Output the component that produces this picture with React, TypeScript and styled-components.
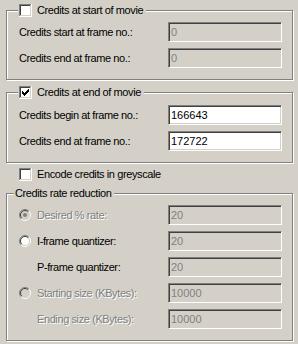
import styled, { createGlobalStyle } from "styled-components";

const GlobalStyle = createGlobalStyle`
    html, body {
        margin: 0;
        padding: 0;
        background: #d4d0c8;
    }
    body {
        font-family: "Liberation Sans", Arial, sans-serif;
        font-size: 11px;
        color: #000;
    }
`;

function CheckBox({ checked }: { checked?: boolean }) {
    return (
        <Box width="13" height="13" viewBox="0 0 13 13" shapeRendering="crispEdges">
            <rect x="0" y="0" width="13" height="13" fill="#fff" />
            <rect x="0" y="0" width="12" height="1" fill="#808080" />
            <rect x="0" y="0" width="1" height="12" fill="#808080" />
            <rect x="1" y="1" width="10" height="1" fill="#404040" />
            <rect x="1" y="1" width="1" height="10" fill="#404040" />
            <rect x="1" y="11" width="11" height="1" fill="#d4d0c8" />
            <rect x="11" y="1" width="1" height="11" fill="#d4d0c8" />
            <rect x="0" y="12" width="13" height="1" fill="#fff" />
            <rect x="12" y="0" width="1" height="13" fill="#fff" />
            {checked &&
                [5, 6, 7, 6, 5, 4, 3].map((y, i) => (
                    <rect key={i} x={3 + i} y={y} width="1" height="3" fill="#000" />
                ))}
        </Box>
    );
}

function Radio({ checked, off }: { checked?: boolean; off?: boolean }) {
    return (
        <Box width="12" height="12" viewBox="0 0 12 12">
            <circle cx="6" cy="6" r="4.5" fill={off ? "#d4d0c8" : "#fff"} />
            <path d="M2.1 9.9A5.5 5.5 0 0 1 9.9 2.1" fill="none" stroke="#808080" />
            <path d="M9.9 2.1A5.5 5.5 0 0 1 2.1 9.9" fill="none" stroke="#fff" />
            <path d="M2.8 9.2A4.5 4.5 0 0 1 9.2 2.8" fill="none" stroke="#404040" />
            <path d="M9.2 2.8A4.5 4.5 0 0 1 2.8 9.2" fill="none" stroke="#d4d0c8" />
            {checked && <circle cx="6" cy="6" r="2" fill={off ? "#808080" : "#000"} />}
        </Box>
    );
}

export default function App() {
    return (
        <>
            <GlobalStyle />
            <Page>
                <Group $top={0} $padTop={5}>
                    <Legend $shift={-1}>
                        <CheckBox />
                        <Text>Credits at start of movie</Text>
                    </Legend>
                    <Row>
                        <Text>Credits start at frame no.:</Text>
                        <Field $off readOnly value="0" />
                    </Row>
                    <Row>
                        <Text>Credits end at frame no.:</Text>
                        <Field $off readOnly value="0" />
                    </Row>
                </Group>

                <Group $top={6} $padTop={6}>
                    <Legend $shift={-1}>
                        <CheckBox checked />
                        <Text>Credits at end of movie</Text>
                    </Legend>
                    <Row>
                        <Text>Credits begin at frame no.:</Text>
                        <Field readOnly value="166643" />
                    </Row>
                    <Row>
                        <Text>Credits end at frame no.:</Text>
                        <Field readOnly value="172722" />
                    </Row>
                </Group>

                <Option>
                    <CheckBox />
                    <Text>Encode credits in greyscale</Text>
                </Option>

                <Group $top={6} $padTop={5}>
                    <Legend $shift={-5}>
                        <Text>Credits rate reduction</Text>
                    </Legend>
                    <Row>
                        <Choice>
                            <Radio checked off />
                            <Text $off>Desired % rate:</Text>
                        </Choice>
                        <Field $off readOnly value="20" />
                    </Row>
                    <Row>
                        <Choice>
                            <Radio />
                            <Text>I-frame quantizer:</Text>
                        </Choice>
                        <Field $off readOnly value="20" />
                    </Row>
                    <Row>
                        <Choice $indent>
                            <Text>P-frame quantizer:</Text>
                        </Choice>
                        <Field $off readOnly value="20" />
                    </Row>
                    <Row>
                        <Choice>
                            <Radio off />
                            <Text $off>Starting size (KBytes):</Text>
                        </Choice>
                        <Field $off readOnly value="10000" />
                    </Row>
                    <Row>
                        <Choice $indent>
                            <Text $off>Ending size (KBytes):</Text>
                        </Choice>
                        <Field $off readOnly value="10000" />
                    </Row>
                </Group>
            </Page>
        </>
    );
}

const Page = styled.div`
    width: 298px;
    height: 344px;
    box-sizing: border-box;
    padding: 4px 5px 0 6px;
    display: flex;
    flex-direction: column;
    overflow: hidden;
`;

const Group = styled.fieldset<{ $top: number; $padTop: number }>`
    margin: ${(p) => p.$top}px 0 0 0;
    padding: ${(p) => p.$padTop}px 10px 11px 12px;
    width: 287px;
    box-sizing: border-box;
    min-width: 0;
    border: 1px solid #808080;
    box-shadow: inset 1px 1px 0 #fff, 1px 1px 0 #fff;
    display: flex;
    flex-direction: column;
    gap: 6px;
`;

const Legend = styled.legend<{ $shift: number }>`
    margin-left: ${(p) => p.$shift}px;
    padding: 0 3px 0 1px;
    height: 13px;
    background: #d4d0c8;
    display: flex;
    align-items: center;
    gap: 5px;
`;

const Box = styled.svg`
    display: block;
    flex: none;
`;

const Text = styled.span<{ $off?: boolean }>`
    line-height: 13px;
    letter-spacing: -0.4px;
    white-space: nowrap;
    color: ${(p) => (p.$off ? "#808080" : "#000")};
    text-shadow: ${(p) => (p.$off ? "1px 1px 0 #fff" : "none")};
`;

const Row = styled.div`
    height: 20px;
    display: flex;
    align-items: center;
    justify-content: space-between;
`;

const Choice = styled.div<{ $indent?: boolean }>`
    display: flex;
    align-items: center;
    gap: 6px;
    padding-left: ${(p) => (p.$indent ? "18px" : "0")};
`;

const Option = styled.div`
    margin: 5px 0 0 13px;
    height: 13px;
    display: flex;
    align-items: center;
    gap: 5px;
`;

const Field = styled.input<{ $off?: boolean }>`
    width: 114px;
    height: 20px;
    box-sizing: border-box;
    margin: 0;
    padding: 0 2px;
    border: 1px solid;
    border-color: #808080 #fff #fff #808080;
    box-shadow: inset 1px 1px 0 #404040, inset -1px -1px 0 #d4d0c8;
    outline: none;
    font: inherit;
    font-size: 11px;
    color: ${(p) => (p.$off ? "#808080" : "#000")};
    background: ${(p) => (p.$off ? "#d4d0c8" : "#fff")};
`;
